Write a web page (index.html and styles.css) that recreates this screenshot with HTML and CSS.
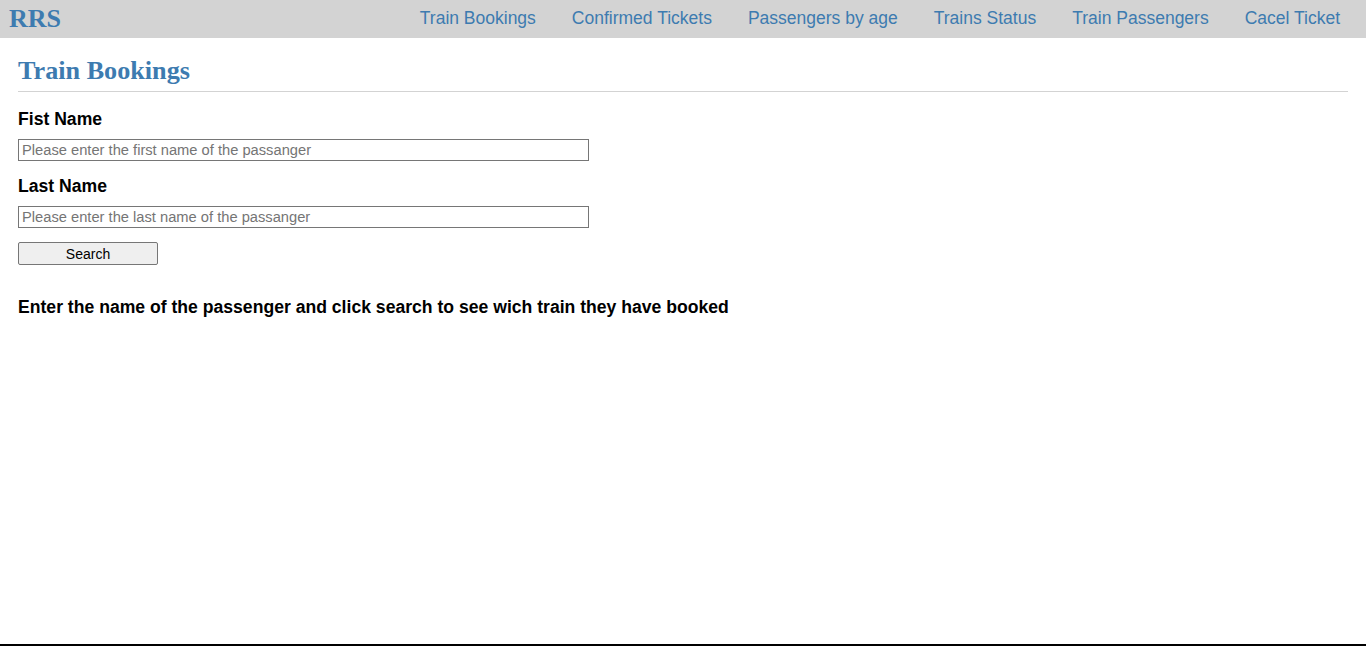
FILE: index.html
```html
<!DOCTYPE html>
<html>
<head>
<meta charset="utf-8">
<title>RRS - Train Bookings</title>
<link rel="stylesheet" href="styles.css">
</head>
<body>
<div class="page">
  <header class="topbar">
    <a class="brand" href="#">RRS</a>
    <nav class="nav">
      <a href="#">Train Bookings</a>
      <a href="#">Confirmed Tickets</a>
      <a href="#">Passengers by age</a>
      <a href="#">Trains Status</a>
      <a href="#">Train Passengers</a>
      <a href="#">Cacel Ticket</a>
    </nav>
  </header>
  <main class="content">
    <h1 class="title">Train Bookings</h1>
    <form class="form">
      <label class="label" for="fn">Fist Name</label>
      <input class="field" id="fn" type="text" placeholder="Please enter the first name of the passanger">
      <label class="label label-second" for="ln">Last Name</label>
      <input class="field" id="ln" type="text" placeholder="Please enter the last name of the passanger">
      <button class="btn" type="button">Search</button>
    </form>
    <p class="hint">Enter the name of the passenger and click search to see wich train they have booked</p>
  </main>
</div>
</body>
</html>
```

FILE: styles.css
```css
html, body {
  margin: 0;
  padding: 0;
}
body {
  font-family: "Liberation Sans", Arial, sans-serif;
  color: #000;
  background: #fff;
}
.page {
  min-height: 100vh;
  box-sizing: border-box;
  border-bottom: 2px solid #000;
  display: flex;
  flex-direction: column;
}
.topbar {
  height: 38px;
  background: #d3d3d3;
  display: flex;
  align-items: center;
  justify-content: space-between;
  padding: 0 26px 0 9px;
}
.brand {
  font-family: "Liberation Serif", "Times New Roman", serif;
  font-weight: bold;
  font-size: 26px;
  color: #3d7bb0;
  text-decoration: none;
  line-height: 38px;
}
.nav {
  display: flex;
  gap: 36px;
  padding-bottom: 2px;
}
.nav a {
  font-size: 17.5px;
  color: #3d7bb0;
  text-decoration: none;
  line-height: 36px;
}
.content {
  flex: 1;
  padding: 0 18px;
}
.title {
  font-family: "Liberation Serif", "Times New Roman", serif;
  font-weight: bold;
  font-size: 26.2px;
  line-height: 30px;
  color: #3d7bb0;
  margin: 18px 0 0;
  padding-bottom: 5px;
  border-bottom: 1px solid #d3d3d3;
}
.form {
  display: flex;
  flex-direction: column;
  align-items: flex-start;
  margin-top: 17px;
}
.label {
  font-weight: bold;
  font-size: 17.6px;
  line-height: 20px;
  margin-bottom: 10px;
}
.label-second {
  margin-top: 15px;
}
.field {
  width: 571px;
  height: 22px;
  box-sizing: border-box;
  border: 1px solid #767676;
  border-radius: 0;
  padding: 0 3px;
  font-family: "Liberation Sans", Arial, sans-serif;
  font-size: 14.7px;
  margin: 0;
}
.field::placeholder {
  color: #757575;
}
.btn {
  margin-top: 14px;
  width: 140px;
  height: 23px;
  box-sizing: border-box;
  background: #efefef;
  border: 1px solid #767676;
  border-radius: 2px;
  font-family: "Liberation Sans", Arial, sans-serif;
  font-size: 14px;
  color: #000;
  padding: 0;
}
.hint {
  font-weight: bold;
  font-size: 17.6px;
  line-height: 20px;
  margin: 32px 0 0;
}
```
